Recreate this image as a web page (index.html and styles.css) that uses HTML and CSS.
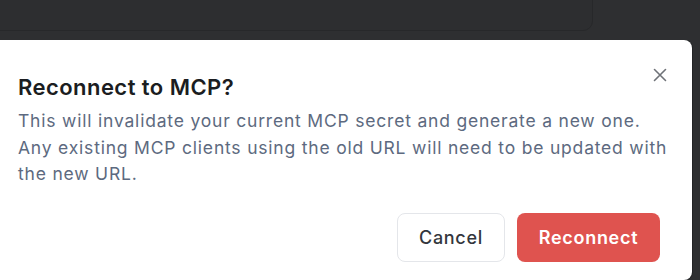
FILE: index.html
```html
<!DOCTYPE html>
<html>

<head>
    <meta charset="utf-8">
    <title>Reconnect to MCP?</title>
    <link rel="stylesheet" href="styles.css">
</head>

<body>
    <div class="page-card"></div>

    <div class="dialog">
        <button class="close-btn" aria-label="Close">
            <svg width="14" height="14" viewBox="0 0 14 14" fill="none">
                <path d="M1.5 1.5L12.5 12.5M12.5 1.5L1.5 12.5" stroke="currentColor" stroke-width="1.6" stroke-linecap="round"/>
            </svg>
        </button>
        <h2 class="dialog-title">Reconnect to MCP?</h2>
        <p class="dialog-text">This will invalidate your current MCP secret and generate a new one. Any existing MCP clients using the old URL will need to be updated with the new URL.</p>
        <div class="dialog-footer">
            <button class="btn btn-cancel">Cancel</button>
            <button class="btn btn-danger">Reconnect</button>
        </div>
    </div>
</body>
</html>
```

FILE: styles.css
```css
*{
    margin: 0;
    padding: 0;
    box-sizing: border-box;
}
body{
    background-color: #2e2f31;
    font-family: Inter, "Liberation Sans", sans-serif;
    overflow: hidden;
}
.page-card{
    width: 613px;
    height: 41px;
    margin: -10px 0 0 -20px;
    border: 1px solid #27282a;
    border-radius: 10px;
    background-color: #2d2e30;
}
.dialog{
    position: relative;
    width: 712px;
    height: 240px;
    margin: 9px 0 0 -20px;
    padding: 33px 18px 0 38px;
    border-radius: 8px;
    background-color: #fff;
    box-shadow: 1px 0 0 #232426;
}
.close-btn{
    position: absolute;
    top: 27px;
    right: 24px;
    width: 16px;
    height: 16px;
    display: flex;
    align-items: center;
    justify-content: center;
    border: none;
    background: none;
    color: #6f7278;
    cursor: pointer;
}
.dialog-title{
    font-size: 22px;
    line-height: 28px;
    font-weight: 600;
    color: #1b1d21;
    letter-spacing: 0.45px;
}
.dialog-text{
    margin-top: 7px;
    font-size: 17.5px;
    line-height: 26.6px;
    letter-spacing: 0.8px;
    color: #5d6a80;
}
.dialog-footer{
    display: flex;
    justify-content: flex-end;
    gap: 12px;
    margin-top: 25px;
    padding-right: 14px;
}
.btn{
    height: 49px;
    border-radius: 8px;
    font-family: inherit;
    font-size: 18px;
    letter-spacing: 0.7px;
    font-weight: 500;
    cursor: pointer;
}
.btn-cancel{
    width: 108px;
    border: 1px solid #e4e6ea;
    background-color: #fff;
    color: #33363c;
}
.btn-danger{
    width: 143px;
    border: none;
    background-color: #df534f;
    color: #fff;
    font-weight: 600;
}
```
